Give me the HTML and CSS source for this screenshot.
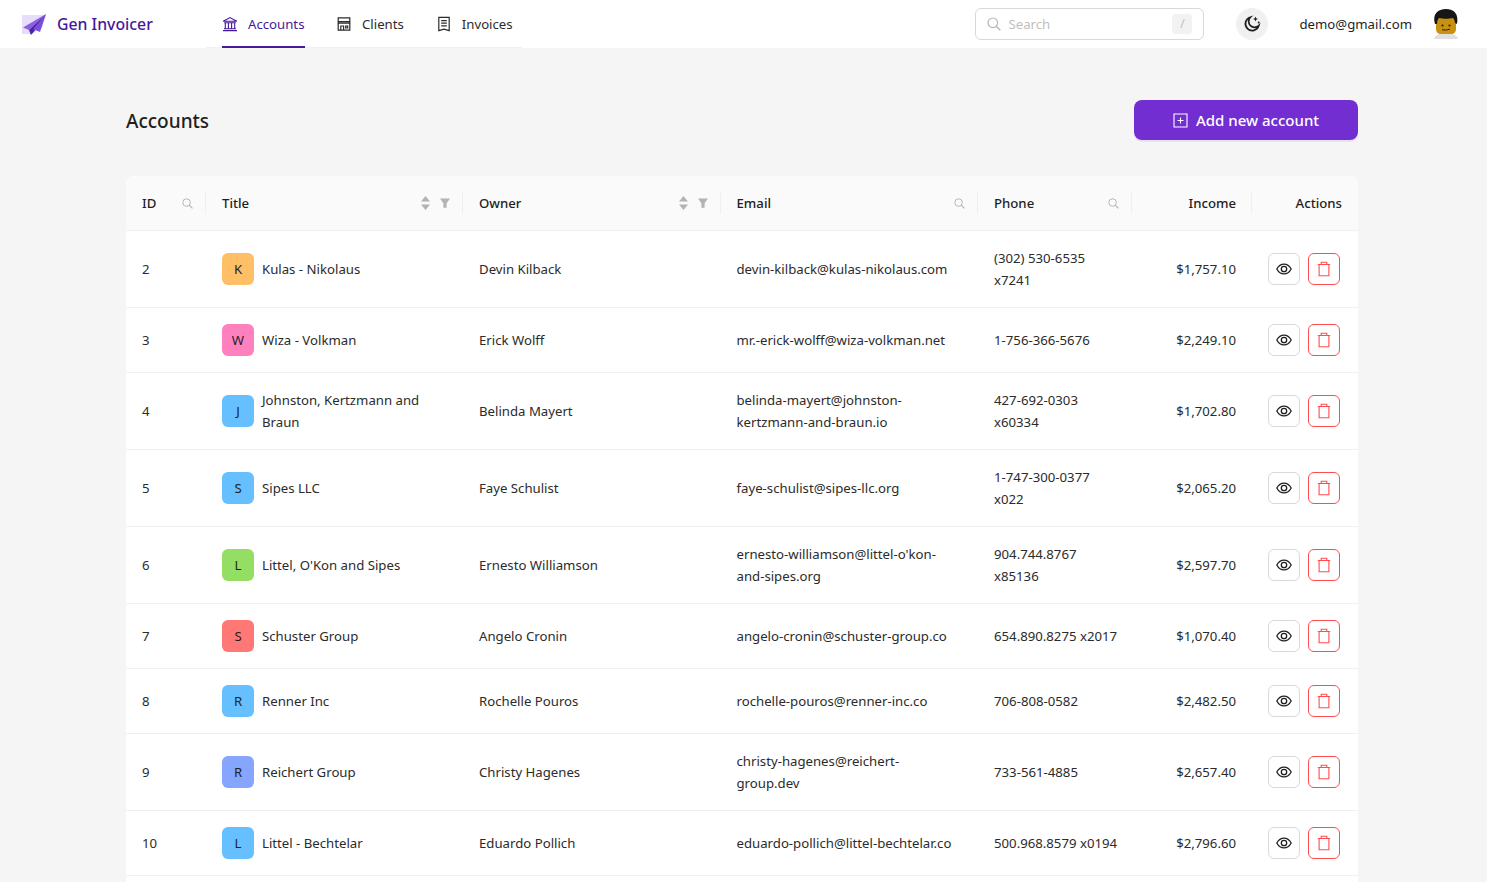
FILE: index.html
```html
<!DOCTYPE html>
<html lang="en">
<head>
<meta charset="utf-8">
<title>Accounts - Gen Invoicer</title>
<link rel="stylesheet" href="styles.css">
</head>
<body>
<svg class="sprite" width="0" height="0" aria-hidden="true">
  <symbol id="i-search" viewBox="0 0 14 14"><circle cx="5.8" cy="5.8" r="4.8" fill="none" stroke="currentColor" stroke-width="1.2"/><path d="M9.2 9.2L13.300 13.300" stroke="currentColor" stroke-width="1.400" fill="none"/></symbol>
  <symbol id="i-eye" viewBox="0 0 16 16"><path d="M.8 8C2.600 4.700 5 3.100 8 3.100s5.400 1.600 7.200 4.900c-1.800 3.300-4.200 4.900-7.200 4.900S2.600 11.300.8 8z" fill="none" stroke="currentColor" stroke-width="1.300"/><circle cx="8" cy="8" r="2.700" fill="none" stroke="currentColor" stroke-width="1.300"/></symbol>
  <symbol id="i-trash" viewBox="0 0 16 16"><path d="M1.800 3.500h12.400M5.200 3.500V1.300h5.600v2.200M3.100 3.500v11.200h9.800V3.500" fill="none" stroke="currentColor" stroke-width="1.100"/></symbol>
  <symbol id="i-sort" viewBox="0 0 9 14"><path d="M4.500 0L9 5.500H0zM4.500 14L0 8.500h9z" fill="currentColor"/></symbol>
  <symbol id="i-filter" viewBox="0 0 10 10"><path d="M0 .5h10L6.600 5.200V9.800H3.400V5.200z" fill="currentColor"/></symbol>
</svg>

<header class="topbar">
  <div class="brand">
    <svg class="brand-logo" viewBox="0 0 25 21" aria-hidden="true">
      <path d="M0 1h24L20 14 10 20H0z" fill="#e6dcfb"/>
      <path d="M24 0L1 13.500l6 2.500z" fill="#8a5fe0"/>
      <path d="M24 0L7 16l2 5 3.500-4z" fill="#4f1fb0"/>
      <path d="M24 0L11 15l7 3z" fill="#7a4fd8"/>
    </svg>
    <span class="brand-name">Gen Invoicer</span>
  </div>
  <nav class="tabs">
    <a class="tab tab-active" href="#">
      <svg class="tab-icon" viewBox="0 0 16 16" aria-hidden="true"><path d="M1.200 5.300L8 1.600l6.800 3.700zM3.300 7v5.500M6.400 7v5.500M9.600 7v5.500M12.700 7v5.500M2.200 6.800h11.600M2 12.800h12M1 14.600h14" fill="none" stroke="currentColor" stroke-width="1.100"/></svg>
      <span>Accounts</span>
    </a>
    <a class="tab tab-clients" href="#">
      <svg class="tab-icon" viewBox="0 0 16 16" aria-hidden="true"><path d="M2.200 1.800h11.600v12.400H2.200zM2.200 5.600h11.600M1.500 7.200h13M4.800 14V10h2.800v4M9.700 10h2v2h-2z" fill="none" stroke="currentColor" stroke-width="1.200"/></svg>
      <span>Clients</span>
    </a>
    <a class="tab" href="#">
      <svg class="tab-icon" viewBox="0 0 16 16" aria-hidden="true"><path d="M2.800 1.400h10.400v13.200L8 13.200l-5.200 1.400zM5.200 4.600h5.600M5.200 7.200h5.600M5.200 9.800h5.600" fill="none" stroke="currentColor" stroke-width="1.200"/></svg>
      <span>Invoices</span>
    </a>
  </nav>
  <div class="topbar-right">
    <label class="search">
      <svg class="search-icon"><use href="#i-search"/></svg>
      <span class="search-text">Search</span>
      <kbd class="search-key">/</kbd>
    </label>
    <button class="theme-btn" type="button" aria-label="Toggle theme">
      <svg viewBox="0 0 18 18" aria-hidden="true"><path d="M7.400 2.200A6.800 6.800 0 1 0 15.800 10.600 5.600 5.600 0 0 1 7.400 2.200z" fill="none" stroke="#1f1f1f" stroke-width="1.700"/><path d="M12.500 1.500l.7 1.800 1.800.7-1.800.7-.7 1.800-.7-1.800-1.800-.7 1.800-.7z" fill="#1f1f1f"/><circle cx="15.700" cy="7.600" r="1" fill="#1f1f1f"/></svg>
    </button>
    <span class="user-email">demo@gmail.com</span>
    <svg class="user-avatar" viewBox="0 0 28 30" aria-hidden="true">
      <path d="M2 30c0-3 5-6 12-6s12 3 12 6z" fill="#e0e0e0"/>
      <path d="M4 8h20v12c0 3-2 5-5 5H9c-3 0-5-2-5-5z" fill="#c8910f"/>
      <path d="M3 15C0 5 6 0 14 0c8 0 13 5 11 15l-2-1c0-2-1-4-2-5-4 1-10 1-14 0-1 1-2 3-2 6z" fill="#161616"/>
      <circle cx="10.500" cy="16.500" r="1.100" fill="#222"/><circle cx="17.500" cy="16.500" r="1.100" fill="#222"/>
      <path d="M10 20.500c2 .8 5 .8 8-.5" stroke="#222" stroke-width="1" fill="none"/>
    </svg>
  </div>
</header>

<main class="page">
  <div class="page-head">
    <h1 class="page-title">Accounts</h1>
    <button class="add-btn" type="button">
      <svg viewBox="0 0 15 15" aria-hidden="true"><path d="M1 1h13v13H1zM7.500 4.500v6M4.500 7.500h6" fill="none" stroke="#fff" stroke-width="1.100"/></svg>
      <span>Add new account</span>
    </button>
  </div>

  <div class="card">
    <table class="grid">
      <colgroup>
        <col class="c-id"><col class="c-title"><col class="c-owner"><col class="c-email"><col class="c-phone"><col class="c-income"><col class="c-actions">
      </colgroup>
      <thead>
        <tr>
          <th class="sep"><div class="th-in"><span>ID</span><svg class="th-search"><use href="#i-search"/></svg></div></th>
          <th class="sep"><div class="th-in"><span>Title</span><span class="th-tools"><svg class="th-sort"><use href="#i-sort"/></svg><svg class="th-filter"><use href="#i-filter"/></svg></span></div></th>
          <th class="sep"><div class="th-in"><span>Owner</span><span class="th-tools"><svg class="th-sort"><use href="#i-sort"/></svg><svg class="th-filter"><use href="#i-filter"/></svg></span></div></th>
          <th class="sep"><div class="th-in"><span>Email</span><svg class="th-search"><use href="#i-search"/></svg></div></th>
          <th class="sep"><div class="th-in"><span>Phone</span><svg class="th-search"><use href="#i-search"/></svg></div></th>
          <th class="sep num">Income</th>
          <th class="num">Actions</th>
        </tr>
      </thead>
      <tbody>
        <tr><td>2</td><td><div class="acct"><span class="av av-orange">K</span><span>Kulas - Nikolaus</span></div></td><td>Devin Kilback</td><td>devin-kilback@kulas-nikolaus.com</td><td>(302) 530-6535 x7241</td><td class="num">$1,757.10</td><td><div class="acts"><button class="act" type="button"><svg><use href="#i-eye"/></svg></button><button class="act act-del" type="button"><svg><use href="#i-trash"/></svg></button></div></td></tr>
        <tr><td>3</td><td><div class="acct"><span class="av av-pink">W</span><span>Wiza - Volkman</span></div></td><td>Erick Wolff</td><td>mr.-erick-wolff@wiza-volkman.net</td><td>1-756-366-5676</td><td class="num">$2,249.10</td><td><div class="acts"><button class="act" type="button"><svg><use href="#i-eye"/></svg></button><button class="act act-del" type="button"><svg><use href="#i-trash"/></svg></button></div></td></tr>
        <tr><td>4</td><td><div class="acct"><span class="av av-blue">J</span><span>Johnston, Kertzmann and Braun</span></div></td><td>Belinda Mayert</td><td>belinda-mayert@johnston-kertzmann-and-braun.io</td><td>427-692-0303 x60334</td><td class="num">$1,702.80</td><td><div class="acts"><button class="act" type="button"><svg><use href="#i-eye"/></svg></button><button class="act act-del" type="button"><svg><use href="#i-trash"/></svg></button></div></td></tr>
        <tr><td>5</td><td><div class="acct"><span class="av av-blue">S</span><span>Sipes LLC</span></div></td><td>Faye Schulist</td><td>faye-schulist@sipes-llc.org</td><td>1-747-300-0377 x022</td><td class="num">$2,065.20</td><td><div class="acts"><button class="act" type="button"><svg><use href="#i-eye"/></svg></button><button class="act act-del" type="button"><svg><use href="#i-trash"/></svg></button></div></td></tr>
        <tr><td>6</td><td><div class="acct"><span class="av av-green">L</span><span>Littel, O'Kon and Sipes</span></div></td><td>Ernesto Williamson</td><td>ernesto-williamson@littel-o'kon-and-sipes.org</td><td>904.744.8767 x85136</td><td class="num">$2,597.70</td><td><div class="acts"><button class="act" type="button"><svg><use href="#i-eye"/></svg></button><button class="act act-del" type="button"><svg><use href="#i-trash"/></svg></button></div></td></tr>
        <tr><td>7</td><td><div class="acct"><span class="av av-red">S</span><span>Schuster Group</span></div></td><td>Angelo Cronin</td><td>angelo-cronin@schuster-group.co</td><td class="nowrap">654.890.8275 x2017</td><td class="num">$1,070.40</td><td><div class="acts"><button class="act" type="button"><svg><use href="#i-eye"/></svg></button><button class="act act-del" type="button"><svg><use href="#i-trash"/></svg></button></div></td></tr>
        <tr><td>8</td><td><div class="acct"><span class="av av-blue">R</span><span>Renner Inc</span></div></td><td>Rochelle Pouros</td><td>rochelle-pouros@renner-inc.co</td><td>706-808-0582</td><td class="num">$2,482.50</td><td><div class="acts"><button class="act" type="button"><svg><use href="#i-eye"/></svg></button><button class="act act-del" type="button"><svg><use href="#i-trash"/></svg></button></div></td></tr>
        <tr><td>9</td><td><div class="acct"><span class="av av-indigo">R</span><span>Reichert Group</span></div></td><td>Christy Hagenes</td><td>christy-hagenes@reichert-group.dev</td><td>733-561-4885</td><td class="num">$2,657.40</td><td><div class="acts"><button class="act" type="button"><svg><use href="#i-eye"/></svg></button><button class="act act-del" type="button"><svg><use href="#i-trash"/></svg></button></div></td></tr>
        <tr><td>10</td><td><div class="acct"><span class="av av-blue">L</span><span>Littel - Bechtelar</span></div></td><td>Eduardo Pollich</td><td>eduardo-pollich@littel-bechtelar.co</td><td class="nowrap">500.968.8579 x0194</td><td class="num">$2,796.60</td><td><div class="acts"><button class="act" type="button"><svg><use href="#i-eye"/></svg></button><button class="act act-del" type="button"><svg><use href="#i-trash"/></svg></button></div></td></tr>
      </tbody>
    </table>
    <div class="card-end"></div>
  </div>
</main>
</body>
</html>
```

FILE: styles.css
```css
* { box-sizing: border-box; }
html, body { height: 100%; overflow: hidden; }
body {
  margin: 0;
  background: #f5f5f5;
  color: #1f1f1f;
  font-family: "Noto Sans", "Open Sans", sans-serif;
  font-size: 13.2px;
  line-height: 22px;
}
.sprite { position: absolute; }

.topbar {
  height: 48px;
  background: #fff;
  display: flex;
  align-items: stretch;
  padding-left: 22px;
}
.brand { display: flex; align-items: center; width: 184px; gap: 10px; }
.brand-logo { width: 25px; height: 21px; }
.brand-name { font-size: 15.800px; font-weight: 500; color: #46189a; }

.tabs {
  display: flex;
  width: 316px;
  padding-left: 16px;
  gap: 31px;
  border-bottom: 1px solid #f0f0f0;
  height: 48px;
}
.tab {
  display: flex;
  align-items: center;
  gap: 10px;
  color: #2b2b2b;
  text-decoration: none;
  height: 48px;
}
.tab-icon { width: 16px; height: 16px; }
.tab-active { width: 83px; color: #46189a; border-bottom: 2px solid #46189a; padding-top: 2px; }
.tab-clients { margin-right: 1px; }

.topbar-right {
  margin-left: auto;
  display: flex;
  align-items: center;
  padding-right: 27px;
}
.search {
  width: 229px;
  height: 32px;
  border: 1px solid #d9d9d9;
  border-radius: 6px;
  background: #fff;
  display: flex;
  align-items: center;
  padding: 0 11px;
  margin-right: 32px;
}
.search-icon { width: 14px; height: 14px; color: #b5b5b5; margin-right: 7px; }
.search-text { color: #bfbfbf; flex: 1; }
.search-key {
  width: 20px;
  height: 20px;
  background: #f2f2f2;
  border-radius: 3px;
  color: #bfbfbf;
  font: inherit;
  font-size: 12px;
  line-height: 20px;
  text-align: center;
}
.theme-btn {
  width: 32px;
  height: 32px;
  border: 0;
  border-radius: 50%;
  background: #f0f0f0;
  padding: 7px;
  margin-right: 31px;
  display: flex;
}
.theme-btn svg { width: 18px; height: 18px; }
.user-email { margin-right: 20px; color: #1f1f1f; }
.user-avatar { width: 28px; height: 30px; display: block; }

.page { padding: 52px 129px 0 126px; }
.page-head {
  height: 40px;
  margin-bottom: 36px;
  display: flex;
  align-items: center;
  justify-content: space-between;
}
.page-title { margin: 0; font-size: 19px; font-weight: 500; line-height: 30px; padding-top: 2px; color: #1f1f1f; }
.add-btn {
  width: 224px;
  height: 40px;
  border: 0;
  border-radius: 8px;
  background: #722ed1;
  box-shadow: 0 2px 0 rgba(114, 46, 209, .1);
  color: #fff;
  font: inherit;
  font-size: 15px;
  font-weight: 500;
  display: flex;
  align-items: center;
  justify-content: center;
  gap: 8px;
}
.add-btn svg { width: 15px; height: 15px; }

.card { background: #fff; border-radius: 8px; overflow: hidden; }
.card-end { height: 40px; }
.grid { width: 1232px; table-layout: fixed; border-collapse: separate; border-spacing: 0; }
.c-id { width: 80px; }
.c-title { width: 257px; }
.c-owner { width: 257.500px; }
.c-email { width: 257.500px; }
.c-phone { width: 154px; }
.c-income { width: 120px; }
.c-actions { width: 106px; }

th, td { padding: 16px; text-align: left; border-bottom: 1px solid #f0f0f0; overflow-wrap: break-word; }
th { background: #fafafa; font-weight: 500; position: relative; padding-right: 13px; color: #1f1f1f; }
td { color: #2b2b2b; }
td.nowrap { white-space: nowrap; padding-right: 0; }
th.num, td.num { text-align: right; padding-right: 16px; }
.sep::before {
  content: "";
  position: absolute;
  top: 16px;
  right: 0;
  width: 1px;
  height: 22px;
  background: #f0f0f0;
}
.th-in { display: flex; align-items: center; justify-content: space-between; }
.th-search { width: 11px; height: 11px; color: #b3b3b3; }
.th-tools { display: flex; align-items: center; gap: 10px; }
.th-sort { width: 9px; height: 14px; color: #b3b3b3; }
.th-filter { width: 10px; height: 10px; color: #b3b3b3; }

.acct { display: flex; align-items: center; gap: 8px; }
.av {
  flex: none;
  width: 32px;
  height: 32px;
  border-radius: 6px;
  text-align: center;
  line-height: 32px;
  color: #1f1f1f;
}
.av-orange { background: #ffbf66; }
.av-pink { background: #ff80bf; }
.av-blue { background: #66bfff; }
.av-green { background: #95de64; }
.av-red { background: #ff7875; }
.av-indigo { background: #85a5ff; }

.acts { display: flex; gap: 8px; }
.act {
  width: 32px;
  height: 32px;
  padding: 7px;
  background: #fff;
  border: 1px solid #d9d9d9;
  border-radius: 6px;
  color: #1f1f1f;
  display: flex;
}
.act svg { width: 16px; height: 16px; }
.act-del { border-color: #ff4d4f; color: #ff4d4f; }
```
